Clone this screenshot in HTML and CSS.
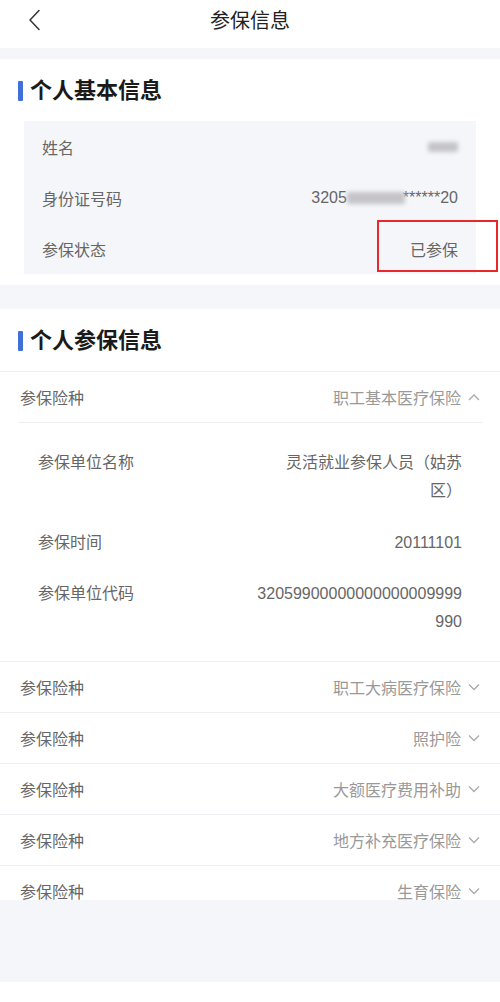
FILE: index.html
```html
<!DOCTYPE html>
<html lang="zh-CN">
<head>
<meta charset="utf-8">
<title>参保信息</title>
<link rel="stylesheet" href="styles.css">
</head>
<body>
<header class="topbar">
  <svg class="back" width="14" height="22" viewBox="0 0 14 22"><path d="M11 1.5 L2 11 L11 20.5" fill="none" stroke="#333" stroke-width="1.5" stroke-linecap="round" stroke-linejoin="round"/></svg>
  <h1 class="page-title">参保信息</h1>
</header>

<section class="panel panel-basic">
  <h2 class="sec-title">个人基本信息</h2>
  <div class="card">
    <div class="card-row"><span class="lbl">姓名</span><span class="val"><span class="blur blur-name"></span></span></div>
    <div class="card-row"><span class="lbl">身份证号码</span><span class="val">3205<span class="blur blur-id"></span>******20</span></div>
    <div class="card-row"><span class="lbl">参保状态</span><span class="val">已参保</span></div>
  </div>
  <div class="mark"></div>
</section>

<section class="panel panel-ins">
  <h2 class="sec-title">个人参保信息</h2>
  <div class="ins open">
    <div class="ins-head"><span class="lbl">参保险种</span><span class="ins-val">职工基本医疗保险<svg class="chev" width="12" height="8" viewBox="0 0 12 8"><path d="M1 7 L6 2 L11 7" fill="none" stroke="#aaa" stroke-width="1.3"/></svg></span></div>
    <div class="detail">
      <div class="d-row"><span class="lbl">参保单位名称</span><span class="d-val name">灵活就业参保人员（姑苏区）</span></div>
      <div class="d-row"><span class="lbl">参保时间</span><span class="d-val">20111101</span></div>
      <div class="d-row"><span class="lbl">参保单位代码</span><span class="d-val code">32059900000000000009999990</span></div>
    </div>
  </div>
  <div class="ins"><div class="ins-head"><span class="lbl">参保险种</span><span class="ins-val">职工大病医疗保险<svg class="chev" width="12" height="8" viewBox="0 0 12 8"><path d="M1 1.5 L6 6.5 L11 1.5" fill="none" stroke="#aaa" stroke-width="1.3"/></svg></span></div></div>
  <div class="ins"><div class="ins-head"><span class="lbl">参保险种</span><span class="ins-val">照护险<svg class="chev" width="12" height="8" viewBox="0 0 12 8"><path d="M1 1.5 L6 6.5 L11 1.5" fill="none" stroke="#aaa" stroke-width="1.3"/></svg></span></div></div>
  <div class="ins"><div class="ins-head"><span class="lbl">参保险种</span><span class="ins-val">大额医疗费用补助<svg class="chev" width="12" height="8" viewBox="0 0 12 8"><path d="M1 1.5 L6 6.5 L11 1.5" fill="none" stroke="#aaa" stroke-width="1.3"/></svg></span></div></div>
  <div class="ins"><div class="ins-head"><span class="lbl">参保险种</span><span class="ins-val">地方补充医疗保险<svg class="chev" width="12" height="8" viewBox="0 0 12 8"><path d="M1 1.5 L6 6.5 L11 1.5" fill="none" stroke="#aaa" stroke-width="1.3"/></svg></span></div></div>
  <div class="ins"><div class="ins-head"><span class="lbl">参保险种</span><span class="ins-val">生育保险<svg class="chev" width="12" height="8" viewBox="0 0 12 8"><path d="M1 1.5 L6 6.5 L11 1.5" fill="none" stroke="#aaa" stroke-width="1.3"/></svg></span></div></div>
</section>

<div class="spacer"></div>
<footer class="footer"></footer>
</body>
</html>
```

FILE: styles.css
```css
* { box-sizing: border-box; }
html, body { margin: 0; padding: 0; }
body {
  width: 500px;
  background: #f5f6fa;
  font-family: "Liberation Sans", "Noto Sans CJK SC", sans-serif;
  color: #333;
  text-spacing-trim: space-all;
}
.topbar {
  height: 48px;
  background: #fff;
  display: flex;
  align-items: center;
  justify-content: center;
  position: relative;
  margin-bottom: 11px;
}
.back { position: absolute; left: 28px; top: 9px; }
.page-title {
  margin: 0;
  font-size: 20px;
  font-weight: normal;
  line-height: 26px;
  color: #222;
  margin-top: -6px;
}
.panel { background: #fff; position: relative; }
.panel-basic { padding: 19px 0 11px; margin-bottom: 24px; }
.sec-title {
  margin: 0 0 0 18px;
  font-size: 22px;
  line-height: 26px;
  font-weight: bold;
  color: #1a1a1a;
  display: flex;
  align-items: center;
  gap: 7px;
}
.sec-title::before {
  content: "";
  width: 5px;
  height: 20px;
  background: #3f6fd9;
  border-radius: 1px;
}
.card {
  margin: 17px 24px 0;
  background: #f5f6fa;
  padding: 0 18px;
}
.card-row {
  height: 51px;
  display: flex;
  align-items: center;
  justify-content: space-between;
  font-size: 16px;
}
.lbl { color: #666; font-size: 16px; }
.val { color: #666; display: flex; align-items: center; }
.blur { display: inline-block; background: #c4c4c8; filter: blur(2px); border-radius: 2px; }
.blur-name { width: 30px; height: 10px; }
.blur-id { width: 58px; height: 12px; margin: 0 -2px 0 0; }
.mark {
  position: absolute;
  left: 377px;
  top: 161px;
  width: 121px;
  height: 52px;
  border: 2px solid #e8282b;
}
.panel-ins {
  padding-top: 19px;
  height: 591px;
  overflow: hidden;
}
.panel-ins .sec-title { margin-bottom: 17px; }
.ins { border-top: 1px solid #eeeff2; }
.ins-head {
  height: 50px;
  display: flex;
  align-items: center;
  justify-content: space-between;
  padding: 0 20px;
}
.ins-val {
  color: #999;
  font-size: 16px;
  display: flex;
  align-items: center;
  gap: 7px;
}
.chev { display: block; }
.detail {
  margin: 0 18px;
  border-top: 1px solid #eeeff2;
  padding: 26px 20px 25px;
  display: flex;
  flex-direction: column;
  gap: 23.5px;
}
.d-row {
  display: flex;
  justify-content: space-between;
  align-items: flex-start;
  font-size: 16px;
  line-height: 28px;
}
.d-val {
  color: #666;
  text-align: right;
  max-width: 206px;
}
.d-val.name { max-width: 196px; }
.code { word-break: break-all; }
.spacer { height: 82px; }
.footer { height: 20px; background: #fff; }
```
